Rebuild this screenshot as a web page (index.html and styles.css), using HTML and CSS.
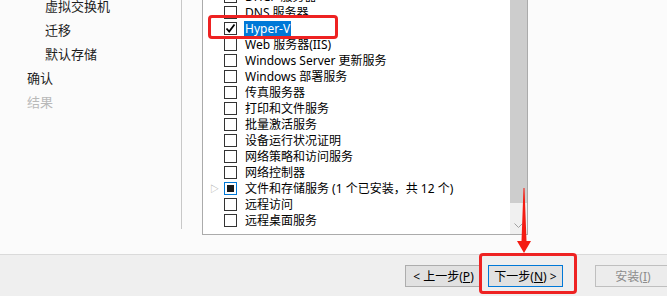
FILE: index.html
```html
<!DOCTYPE html>
<html lang="zh-CN">
<head>
    <meta charset="UTF-8">
    <title>添加角色和功能向导</title>
    <link rel="stylesheet" href="styles.css">
</head>
<body>
    <div class="wizard">
        <div class="main">
            <div class="nav">
                <div class="nav-item sub">虚拟交换机</div>
                <div class="nav-item sub">迁移</div>
                <div class="nav-item sub">默认存储</div>
                <div class="nav-item">确认</div>
                <div class="nav-item disabled">结果</div>
            </div>
            <div class="listbox">
                <div class="rows">
                    <div class="row"><span class="expander"></span><span class="box"></span><span class="label">DHCP 服务器</span></div>
                    <div class="row"><span class="expander"></span><span class="box"></span><span class="label">DNS 服务器</span></div>
                    <div class="row"><span class="expander"></span><span class="box checked"><svg width="11" height="11" viewBox="0 0 11 11"><path d="M1.5 5.5 L4.2 8.5 L9.5 1.5" fill="none" stroke="#000" stroke-width="1.8"/></svg></span><span class="label selected">Hyper-V</span></div>
                    <div class="row"><span class="expander"></span><span class="box"></span><span class="label">Web 服务器(IIS)</span></div>
                    <div class="row"><span class="expander"></span><span class="box"></span><span class="label">Windows Server 更新服务</span></div>
                    <div class="row"><span class="expander"></span><span class="box"></span><span class="label">Windows 部署服务</span></div>
                    <div class="row"><span class="expander"></span><span class="box"></span><span class="label">传真服务器</span></div>
                    <div class="row"><span class="expander"></span><span class="box"></span><span class="label">打印和文件服务</span></div>
                    <div class="row"><span class="expander"></span><span class="box"></span><span class="label">批量激活服务</span></div>
                    <div class="row"><span class="expander"></span><span class="box"></span><span class="label">设备运行状况证明</span></div>
                    <div class="row"><span class="expander"></span><span class="box"></span><span class="label">网络策略和访问服务</span></div>
                    <div class="row"><span class="expander"></span><span class="box"></span><span class="label">网络控制器</span></div>
                    <div class="row"><span class="expander">▷</span><span class="box partial"><i></i></span><span class="label">文件和存储服务 (1 个已安装，共 12 个)</span></div>
                    <div class="row"><span class="expander"></span><span class="box"></span><span class="label">远程访问</span></div>
                    <div class="row"><span class="expander"></span><span class="box"></span><span class="label">远程桌面服务</span></div>
                </div>
                <div class="scrollbar">
                    <div class="thumb"></div>
                    <div class="track"></div>
                    <div class="arrow">
                        <svg width="9" height="6" viewBox="0 0 9 6"><path d="M0.5 0.5 L4.5 4.5 L8.5 0.5" fill="none" stroke="#a0a0a0" stroke-width="1"/></svg>
                    </div>
                </div>
            </div>
        </div>
        <div class="footer">
            <button class="btn">&lt;&nbsp;上一步(<u>P</u>)</button>
            <button class="btn default">下一步(<u>N</u>)&nbsp;&gt;</button>
            <button class="btn install" disabled>安装(<u>I</u>)</button>
        </div>

        <!-- 标注 -->
        <div class="mark mark-hyperv"></div>
        <div class="mark mark-next"></div>
        <svg class="mark-arrow" width="20" height="70" viewBox="0 0 20 70">
            <polygon points="9.5,0 10.5,0 12.5,53 17,53 10,65 3,53 7.5,53" fill="#f41c12"/>
        </svg>
    </div>
</body>
</html>
```

FILE: styles.css
```css
* {
    margin: 0;
    padding: 0;
    box-sizing: border-box;
}

body {
    width: 667px;
    height: 296px;
    overflow: hidden;
    background: #efefef;
    font-family: 'Segoe UI', 'Noto Sans', 'Noto Sans CJK SC', sans-serif;
    color: #000;
}

.wizard {
    position: relative;
    height: 296px;
}

.main {
    display: flex;
    height: 255px;
    background: #fbfbfb;
    border-bottom: 1px solid #dadada;
}

.nav {
    width: 182px;
    height: 235px;
    margin-top: -6px;
    border-right: 1px solid #c8c8c8;
    font-size: 13px;
    font-family: 'Noto Sans CJK SC', sans-serif;
}

.nav-item {
    height: 24px;
    line-height: 24px;
    padding-left: 27px;
    color: #1e1e1e;
}

.nav-item.sub {
    padding-left: 45px;
}

.nav-item.disabled {
    color: #b9b9b9;
}

.listbox {
    display: flex;
    width: 326px;
    height: 235px;
    margin-left: 20px;
    border: 1px solid #ababab;
    border-top: none;
    background: #fff;
    overflow: hidden;
}

.rows {
    flex: 1;
    margin-top: -12px;
    font-size: 12px;
}

.row {
    display: flex;
    align-items: center;
    height: 16px;
}

.expander {
    width: 21px;
    font-size: 9px;
    color: #a6a6a6;
    text-align: center;
    padding-left: 2px;
}

.box {
    width: 13px;
    height: 13px;
    border: 1px solid #333;
    background: #fff;
    display: flex;
    align-items: center;
    justify-content: center;
}

.box.partial {
    border-color: #0078d7;
}

.box.partial i {
    width: 7px;
    height: 7px;
    background: #1a1a1a;
}

.label {
    margin-left: 7px;
    padding: 0 1px;
    line-height: 15px;
    white-space: nowrap;
}

.label.selected {
    background: #0078d7;
    color: #fff;
}

.scrollbar {
    width: 17px;
    display: flex;
    flex-direction: column;
    background: #f0f0f0;
}

.thumb {
    height: 203px;
    background: #cdcdcd;
}

.track {
    flex: 1;
}

.arrow {
    height: 17px;
    display: flex;
    justify-content: center;
    align-items: center;
}

.footer {
    display: flex;
    align-items: flex-start;
    padding: 10px 0 0 405px;
    height: 40px;
    background: #efefef;
}

.btn {
    height: 22px;
    width: 77px;
    border: 1px solid #adadad;
    background: #e1e1e1;
    font-family: 'Segoe UI', 'Noto Sans', 'Noto Sans CJK SC', sans-serif;
    font-size: 12px;
    color: #000;
    flex-shrink: 0;
}

.btn.default {
    width: 75px;
    margin-left: 6px;
    border-color: #0078d7;
}

.btn.install {
    margin-left: 32px;
    width: 76px;
    background: #ececec;
    border-color: #bfbfbf;
    color: #8d8d8d;
}

.mark {
    position: absolute;
    border: 3px solid #ee2222;
    border-radius: 4px;
}

.mark-hyperv {
    left: 208px;
    top: 15px;
    width: 130px;
    height: 24px;
}

.mark-next {
    left: 479px;
    top: 253px;
    width: 98px;
    height: 41px;
}

.mark-arrow {
    position: absolute;
    left: 514px;
    top: 188px;
}
```
